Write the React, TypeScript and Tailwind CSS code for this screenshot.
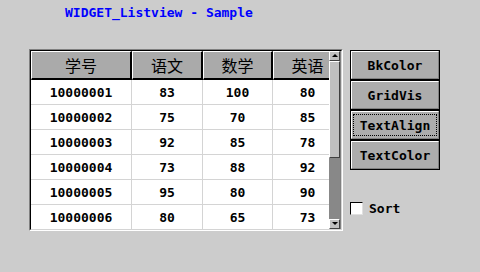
import React from "react";

const rows = [
  ["10000001", "83", "100", "80"],
  ["10000002", "75", "70", "85"],
  ["10000003", "92", "85", "78"],
  ["10000004", "73", "88", "92"],
  ["10000005", "95", "80", "90"],
  ["10000006", "80", "65", "73"],
];

const headers = ["学号", "语文", "数学", "英语"];
const widths = ["w-[101px]", "w-[71px]", "w-[70px]", "w-[70px]"];

const mono = { fontFamily: '"DejaVu Sans Mono", "Liberation Mono", monospace' };
const cjk = { fontFamily: '"Noto Sans CJK SC", "Noto Sans", sans-serif' };

function Btn({ label, focus }: { label: string; focus?: boolean }) {
  return (
    <div className="w-[90px] h-[30px] border border-black">
      <div className="w-full h-full bg-[#acacac] border-t border-l border-white border-b border-r border-b-[#808080] border-r-[#808080] flex items-center justify-center">
        <div
          className={
            "flex items-center justify-center text-[13px] font-bold text-black leading-none " +
            (focus ? "border border-dotted border-black w-[84px] h-[22px]" : "")
          }
          style={mono}
        >
          {label}
        </div>
      </div>
    </div>
  );
}

export default function App() {
  return (
    <div className="w-[480px] h-[272px] bg-[#cccccc] flex flex-col overflow-hidden">
      <div
        className="pl-[65px] pt-[5px] h-[49px] text-[13px] font-bold text-[#0000ff] leading-[16px]"
        style={mono}
      >
        WIDGET_Listview - Sample
      </div>
      <div className="flex pl-[29px]">
        {/* listview */}
        <div className="w-[314px] h-[182px] border-t border-l border-[#808080] border-b border-r border-b-white border-r-white">
          <div className="w-full h-full border-t border-l border-black border-b border-r border-b-[#d4d4d4] border-r-[#d4d4d4] bg-white flex">
            <div className="flex-1 overflow-hidden flex flex-col">
              <div className="flex h-[29px] shrink-0 bg-[#aaaaaa]">
                {headers.map((h, i) => (
                  <div
                    key={h}
                    className={
                      widths[i] +
                      " shrink-0 h-full border-t border-l border-white border-b-2 border-r-2 border-b-black border-r-black flex items-center justify-center text-[16px] text-black leading-none"
                    }
                    style={cjk}
                  >
                    {h}
                  </div>
                ))}
              </div>
              {rows.map((r) => (
                <div key={r[0]} className="flex h-[25px] shrink-0 border-b border-[#d4d4d4]">
                  {r.map((c, i) => (
                    <div
                      key={i}
                      className={
                        widths[i] +
                        " shrink-0 h-full border-r border-[#d4d4d4] flex items-center justify-center text-[13px] font-bold text-black leading-none"
                      }
                      style={mono}
                    >
                      {c}
                    </div>
                  ))}
                </div>
              ))}
            </div>
            {/* scrollbar */}
            <div className="w-[12px] h-full flex flex-col bg-[#888888] border-r border-[#808080]">
              <div className="h-[10px] w-full bg-[#c0c0c0] border-t border-l border-white border-b border-r border-b-[#404040] border-r-[#404040] flex items-center justify-center">
                <svg width="6" height="4" viewBox="0 0 6 4">
                  <polygon points="3,0 6,3 0,3" fill="#000" />
                </svg>
              </div>
              <div className="h-[97px] w-full bg-[#c0c0c0] border-t border-l border-white border-b border-r border-b-[#404040] border-r-[#404040]" />
              <div className="flex-1" />
              <div className="h-[10px] w-full bg-[#c0c0c0] border-t border-l border-white border-b border-r border-b-[#404040] border-r-[#404040] flex items-center justify-center">
                <svg width="6" height="4" viewBox="0 0 6 4">
                  <polygon points="0,0 6,0 3,3" fill="#000" />
                </svg>
              </div>
            </div>
          </div>
        </div>
        {/* right column */}
        <div className="ml-[7px] mt-[1px] flex flex-col">
          <Btn label="BkColor" />
          <Btn label="GridVis" />
          <Btn label="TextAlign" focus />
          <Btn label="TextColor" />
          <div className="mt-[32px] flex items-center">
            <div className="w-[13px] h-[13px] bg-white border-t border-l border-black border-b border-r border-b-[#e0e0e0] border-r-[#e0e0e0]" />
            <span className="ml-[6px] text-[13px] font-bold text-black leading-none" style={mono}>
              Sort
            </span>
          </div>
        </div>
      </div>
    </div>
  );
}
